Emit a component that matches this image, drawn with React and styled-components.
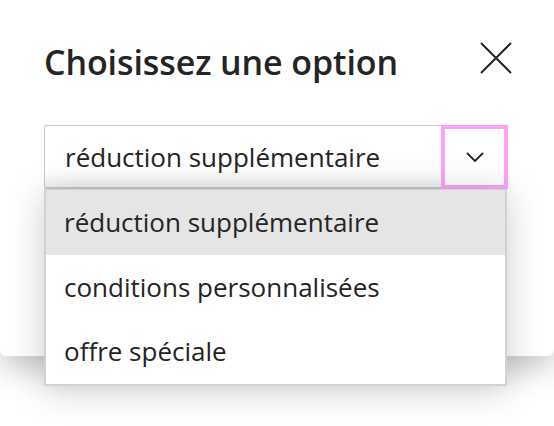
import React, {useState} from 'react'
import styled, {createGlobalStyle} from 'styled-components'

const GlobalStyle = createGlobalStyle`
html, body {
    margin: 0;
    padding: 0;
    min-height: 100%;
    background: #ffffff;
}
body {
    height: 426px;
    font-family: "Open Sans", "Noto Sans", "Liberation Sans", sans-serif;
    color: #242424;
}
`

const options = [
    "réduction supplémentaire",
    "conditions personnalisées",
    "offre spéciale",
]

const CloseIcon = () => (
    <svg width="34" height="34" viewBox="0 0 34 34" fill="none">
        <path d="M2 2L32 32M32 2L2 32" stroke="#242424" strokeWidth="2"/>
    </svg>
)

const ChevronIcon = () => (
    <svg width="18" height="10" viewBox="0 0 18 10" fill="none">
        <path d="M1 1L9 9L17 1" stroke="#242424" strokeWidth="1.8"/>
    </svg>
)

const Dialog = () => {
    const [selected, setSelected] = useState(0)
    const [open, setOpen] = useState(true)

    return (
        <Panel>
            <Header>
                <Title>Choisissez une option</Title>
                <CloseButton aria-label="Fermer"><CloseIcon/></CloseButton>
            </Header>
            <SelectWrap>
                <SelectBox onClick={() => setOpen(!open)}>
                    <Value>{options[selected]}</Value>
                    <Toggle><ChevronIcon/></Toggle>
                </SelectBox>
                {open && (
                    <Menu>
                        {options.map((o, i) => (
                            <Item key={o} active={i === selected} onClick={() => setSelected(i)}>{o}</Item>
                        ))}
                    </Menu>
                )}
            </SelectWrap>
        </Panel>
    )
}

const App = () => (
    <>
        <GlobalStyle/>
        <Dialog/>
    </>
)

const Panel = styled.section`
box-sizing: border-box;
width: 554px;
height: 356px;
padding: 42px 41px 0 44px;
background: #ffffff;
border-radius: 0 0 6px 6px;
box-shadow: 0 12px 30px rgba(0, 0, 0, 0.22);
`

const Header = styled.div`
display: flex;
align-items: flex-start;
justify-content: space-between;
height: 40px;
`

const Title = styled.h2`
margin: 0;
font-size: 34px;
line-height: 40px;
font-weight: 600;
letter-spacing: -0.1px;
`

const CloseButton = styled.button`
display: flex;
padding: 0;
border: none;
background: none;
margin-top: -1px;
cursor: pointer;
`

const SelectWrap = styled.div`
position: relative;
width: 464px;
margin-top: 43px;
`

const SelectBox = styled.div`
box-sizing: border-box;
display: flex;
height: 64px;
border: 1px solid #c8c8c8;
border-bottom-width: 2px;
border-radius: 2px;
background: linear-gradient(#ffffff 75%, #f2f2f2);
cursor: pointer;
`

const Value = styled.div`
flex: 1;
display: flex;
align-items: center;
padding-left: 20px;
font-size: 26px;
`

const Toggle = styled.div`
box-sizing: border-box;
display: flex;
align-items: center;
justify-content: center;
width: 67px;
margin: -1px -1px -2px 0;
padding-bottom: 1px;
border: 4px solid #ffa3f7;
background: #ffffff;
`

const Menu = styled.ul`
position: absolute;
top: 100%;
left: 0;
box-sizing: border-box;
width: 463px;
margin: 0;
padding: 0;
list-style: none;
background: #ffffff;
border: 2px solid #d2d2d2;
border-top-width: 1px;
box-shadow: 0 4px 34px rgba(0, 0, 0, 0.2);
`

const Item = styled.li`
display: flex;
align-items: center;
height: 64.5px;
padding-left: 18px;
font-size: 26px;
background: ${props => props.active ? "#e5e5e5" : "#ffffff"};
cursor: pointer;
`

export default App
